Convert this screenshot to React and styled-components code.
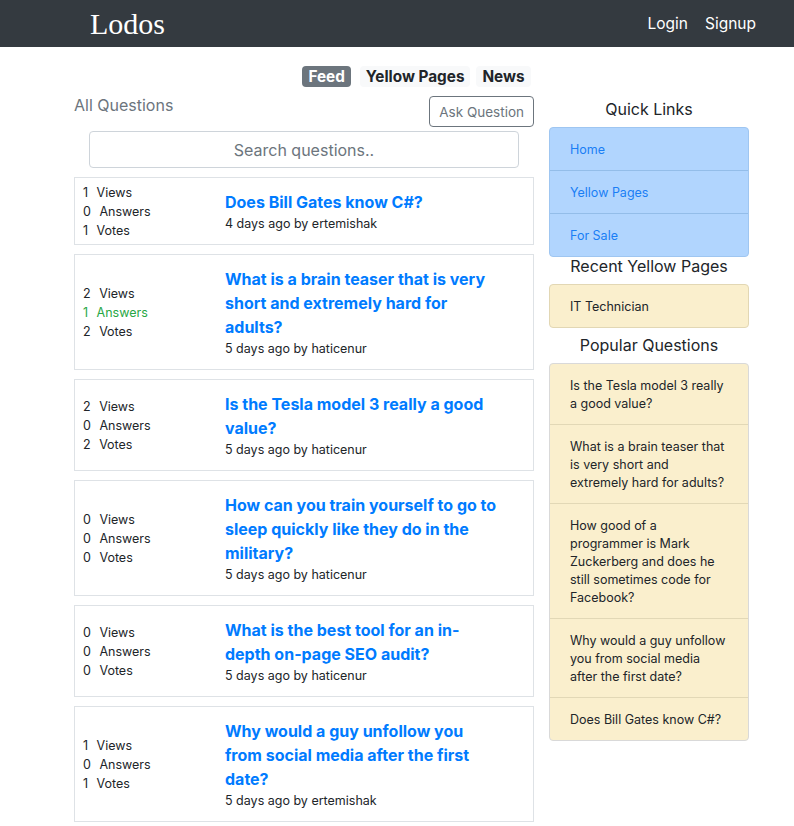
import React from "react";
import styled, { createGlobalStyle } from "styled-components";

const GlobalStyle = createGlobalStyle`
  body {
    margin: 0;
    font-family: Inter, "Liberation Sans", Arial, sans-serif;
    color: #212529;
    background: #fff;
  }
  * { box-sizing: border-box; }
`;

const Navbar = styled.nav`
  height: 47px;
  background: #343a40;
  display: flex;
  align-items: center;
  justify-content: space-between;
  padding: 0 38px 0 90px;
`;

const Brand = styled.a`
  font-family: "Liberation Serif", "Times New Roman", serif;
  font-size: 30px;
  color: #fff;
  text-decoration: none;
  line-height: 1;
`;

const NavLinks = styled.div`
  display: flex;
  gap: 17px;
`;

const NavLink = styled.a`
  color: #fff;
  font-size: 15.5px;
  text-decoration: none;
`;

const Page = styled.div`
  padding-left: 74px;
  padding-top: 19px;
  padding-bottom: 20px;
`;

const Tabs = styled.div`
  width: 685px;
  display: flex;
  justify-content: center;
`;

const Tab = styled.button`
  border: none;
  border-radius: 4px;
  padding: 0 6px;
  height: 21px;
  margin-left: ${(p) => p.$gap || 0}px;
  font-family: inherit;
  font-size: 15.3px;
  font-weight: 700;
  background: ${(p) => (p.$active ? "#6c757d" : "#f8f9fa")};
  color: ${(p) => (p.$active ? "#fff" : "#212529")};
`;

const Main = styled.div`
  display: flex;
  gap: 15px;
  margin-top: 9px;
  align-items: flex-start;
`;

const LeftCol = styled.div`
  width: 460px;
`;

const HeaderRow = styled.div`
  display: flex;
  justify-content: space-between;
  align-items: flex-start;
`;

const SectionTitle = styled.div`
  font-size: 16px;
  line-height: 18px;
  color: #6c757d;
`;

const AskButton = styled.button`
  height: 31px;
  padding: 0 9px;
  background: #fff;
  border: 1px solid #6c757d;
  border-radius: 4px;
  color: #6c757d;
  font-family: inherit;
  font-size: 13.5px;
`;

const Search = styled.input`
  display: block;
  width: 430px;
  height: 37px;
  margin: 4px 15px 0;
  border: 1px solid #ced4da;
  border-radius: 4px;
  text-align: center;
  font-family: inherit;
  font-size: 16px;
  color: #495057;
  &::placeholder { color: #6c757d; }
`;

const CardList = styled.div`
  display: flex;
  flex-direction: column;
  gap: 9px;
  margin-top: 9px;
`;

const Card = styled.div`
  border: 1px solid #dee2e6;
  padding: 4.5px 8px;
  display: flex;
  align-items: center;
`;

const Stats = styled.div`
  width: 142px;
  flex-shrink: 0;
  font-size: 12.5px;
  line-height: 19px;
`;

const Stat = styled.div`
  color: ${(p) => (p.$green ? "#28a745" : "#212529")};
  span { margin-left: 8.5px; }
`;

const TitleCol = styled.div`
  width: 275px;
  padding: 7.5px 0;
`;

const QTitle = styled.a`
  display: block;
  font-size: 16px;
  font-weight: 700;
  line-height: 24px;
  color: #007bff;
  text-decoration: none;
`;

const Meta = styled.div`
  font-size: 12.5px;
  line-height: 18px;
  padding-top: 1px;
  margin-bottom: -1px;
`;

const RightCol = styled.div`
  width: 200px;
  padding-top: 3px;
`;

const SideHeading = styled.div`
  font-size: 16px;
  line-height: 20px;
  text-align: center;
  margin: ${(p) => p.$mt || 0}px 0 8px;
`;

const ListGroup = styled.div`
  border: 1px solid ${(p) => (p.$primary ? "#9fc6f1" : p.$outer || "#e2d7b4")};
  border-radius: 4px;
  overflow: hidden;
  background: ${(p) => (p.$primary ? "#b1d5fe" : "#faefcd")};
`;

const ListItem = styled.a`
  display: block;
  padding: 12.5px 20px 11.5px;
  font-size: 12.5px;
  line-height: 18px;
  text-decoration: none;
  color: ${(p) => (p.$primary ? "#1a7ef5" : "#212529")};
  border-top: 1px solid ${(p) => (p.$primary ? "#93bde9" : "#e2d8b6")};
  &:first-child { border-top: none; }
`;

const questions = [
  { v: 1, a: 0, vo: 1, t: "Does Bill Gates know C#?", m: "4 days ago by ertemishak" },
  { v: 2, a: 1, vo: 2, t: "What is a brain teaser that is very short and extremely hard for adults?", m: "5 days ago by haticenur" },
  { v: 2, a: 0, vo: 2, t: "Is the Tesla model 3 really a good value?", m: "5 days ago by haticenur" },
  { v: 0, a: 0, vo: 0, t: "How can you train yourself to go to sleep quickly like they do in the military?", m: "5 days ago by haticenur" },
  { v: 0, a: 0, vo: 0, t: "What is the best tool for an in-depth on-page SEO audit?", m: "5 days ago by haticenur" },
  { v: 1, a: 0, vo: 1, t: "Why would a guy unfollow you from social media after the first date?", m: "5 days ago by ertemishak" },
];

const popular = [
  "Is the Tesla model 3 really a good value?",
  "What is a brain teaser that is very short and extremely hard for adults?",
  "How good of a programmer is Mark Zuckerberg and does he still sometimes code for Facebook?",
  "Why would a guy unfollow you from social media after the first date?",
  "Does Bill Gates know C#?",
];

export default function App() {
  return (
    <>
      <GlobalStyle />
      <Navbar>
        <Brand href="#">Lodos</Brand>
        <NavLinks>
          <NavLink href="#">Login</NavLink>
          <NavLink href="#">Signup</NavLink>
        </NavLinks>
      </Navbar>
      <Page>
        <Tabs>
          <Tab $active>Feed</Tab>
          <Tab $gap={9}>Yellow Pages</Tab>
          <Tab $gap={6}>News</Tab>
        </Tabs>
        <Main>
          <LeftCol>
            <HeaderRow>
              <SectionTitle>All Questions</SectionTitle>
              <AskButton>Ask Question</AskButton>
            </HeaderRow>
            <Search placeholder="Search questions.." />
            <CardList>
              {questions.map((q, i) => (
                <Card key={i}>
                  <Stats>
                    <Stat>{q.v}<span>Views</span></Stat>
                    <Stat $green={q.a > 0}>{q.a}<span>Answers</span></Stat>
                    <Stat>{q.vo}<span>Votes</span></Stat>
                  </Stats>
                  <TitleCol>
                    <QTitle href="#">{q.t}</QTitle>
                    <Meta>{q.m}</Meta>
                  </TitleCol>
                </Card>
              ))}
            </CardList>
          </LeftCol>
          <RightCol>
            <SideHeading>Quick Links</SideHeading>
            <ListGroup $primary>
              <ListItem $primary href="#">Home</ListItem>
              <ListItem $primary href="#">Yellow Pages</ListItem>
              <ListItem $primary href="#">For Sale</ListItem>
            </ListGroup>
            <SideHeading $mt={-1}>Recent Yellow Pages</SideHeading>
            <ListGroup>
              <ListItem href="#">IT Technician</ListItem>
            </ListGroup>
            <SideHeading $mt={7}>Popular Questions</SideHeading>
            <ListGroup $outer="#d9d9d9">
              {popular.map((p, i) => (
                <ListItem key={i} href="#">{p}</ListItem>
              ))}
            </ListGroup>
          </RightCol>
        </Main>
      </Page>
    </>
  );
}
